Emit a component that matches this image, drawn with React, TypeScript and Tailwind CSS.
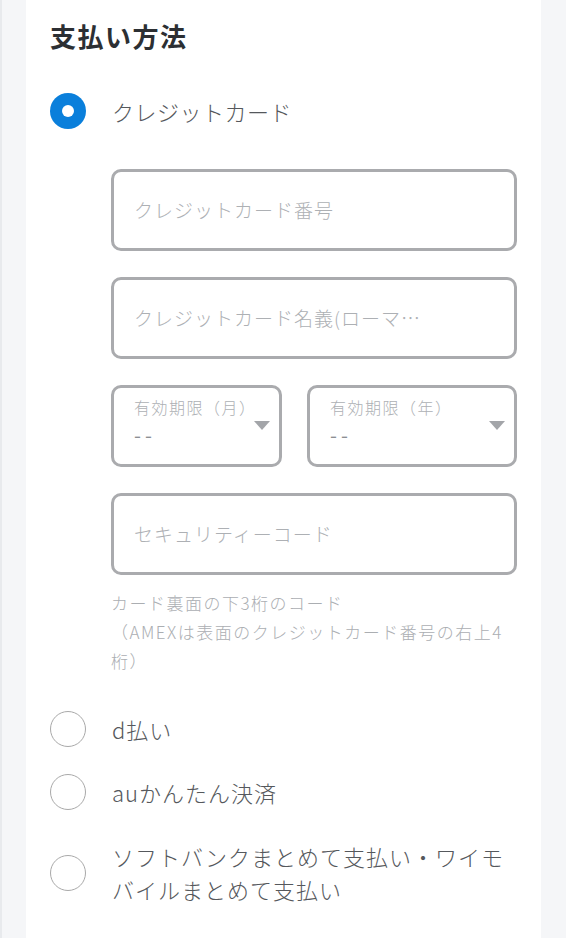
const font = "font-['Noto_Sans_CJK_JP','Noto_Sans',sans-serif]";

const TextField = ({ placeholder }: { placeholder: string }) => (
  <div className="flex h-[82px] items-center rounded-[10px] border-[3px] border-[#aaabae] bg-white pl-[20px] pr-[92px]">
    <span className="truncate text-[19px] font-light tracking-[1px] text-[#adb0b4]">{placeholder}</span>
  </div>
);

const SelectField = ({ label, className }: { label: string; className: string }) => (
  <div className={`relative h-[82px] rounded-[10px] border-[3px] border-[#aaabae] bg-white pl-[20px] ${className}`}>
    <div className="pt-[7px] text-[16px] font-light leading-[24px] tracking-[1.5px] text-[#adb0b4]">{label}</div>
    <div className="mt-[4px] text-[20px] leading-[24px] tracking-[4px] text-[#8c8f93]">--</div>
    {/* caret */}
    <svg className="absolute right-[9px] top-[33px]" width="16" height="9" viewBox="0 0 16 9">
      <path d="M0 0h16L8 9z" fill="#a3a5a9" />
    </svg>
  </div>
);

const Radio = ({ checked }: { checked?: boolean }) =>
  checked ? (
    <span className="flex h-[36px] w-[36px] shrink-0 items-center justify-center rounded-full bg-[#0a7fdb]">
      <span className="h-[12px] w-[12px] rounded-full bg-white" />
    </span>
  ) : (
    <span className="h-[36px] w-[36px] shrink-0 rounded-full border border-[#a9a9a9] bg-white" />
  );

const Option = ({ label, className = "" }: { label: string; className?: string }) => (
  <label className={`flex items-center gap-[26px] ${className}`}>
    <Radio />
    <span className="text-[22px] font-light leading-[33px] tracking-[1px] text-[#55585c]">{label}</span>
  </label>
);

export default function App() {
  return (
    <div className={`flex min-h-screen border-l-2 border-[#e8eaed] bg-[#f5f6f8] pl-[24px] ${font}`}>
      <div className="w-[515px] bg-white px-[24px] pb-[30px] pt-[17px]">
        <h2 className="text-[26px] font-bold leading-[38px] tracking-[1.5px] text-[#2c2f33]">支払い方法</h2>

        <label className="mt-[38px] flex items-center gap-[26px]">
          <Radio checked />
          <span className="text-[22px] font-light leading-[33px] tracking-[0.5px] text-[#55585c]">クレジットカード</span>
        </label>

        <div className="ml-[61px] mt-[40px] flex flex-col gap-[26px]">
          <TextField placeholder="クレジットカード番号" />
          <TextField placeholder="クレジットカード名義(ローマ字)" />
          <div className="flex gap-[25px]">
            <SelectField label="有効期限（月）" className="w-[171px]" />
            <SelectField label="有効期限（年）" className="flex-1" />
          </div>
          <TextField placeholder="セキュリティーコード" />
        </div>
        <p className="ml-[61px] mt-[13px] text-[17px] font-light leading-[29px] tracking-[1.5px] text-[#abaeb2]">
          カード裏面の下3桁のコード
          <br />
          （AMEXは表面のクレジットカード番号の右上4桁）
        </p>

        <div className="mt-[36px] flex flex-col">
          <Option label="d払い" />
          <Option label="auかんたん決済" className="mt-[27px]" />
          <Option label="ソフトバンクまとめて支払い・ワイモバイルまとめて支払い" className="mt-[30px]" />
        </div>
      </div>
    </div>
  );
}
